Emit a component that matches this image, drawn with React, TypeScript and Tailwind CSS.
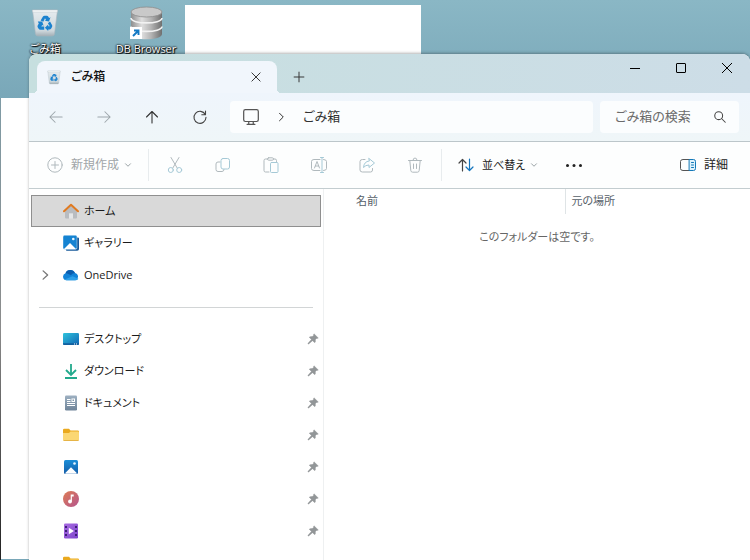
import React from "react";

type Kids = { children?: React.ReactNode; className?: string; stroke?: string };

function Glyph({ children, className = "h-4 w-4", stroke = "#b0b9bd" }: Kids) {
  return (
    <svg
      viewBox="0 0 16 16"
      className={`${className} shrink-0`}
      fill="none"
      stroke={stroke}
      strokeWidth="1"
      strokeLinecap="round"
      strokeLinejoin="round"
      aria-hidden="true"
    >
      {children}
    </svg>
  );
}

function BinIcon({ className, id }: { className: string; id: string }) {
  return (
    <svg viewBox="0 0 28 30" className={className} aria-hidden="true">
      <defs>
        <linearGradient id={id} x1="0" y1="0" x2="0" y2="1">
          <stop offset="0" stopColor="#e6ecef" />
          <stop offset="0.8" stopColor="#cdd7dc" />
          <stop offset="1" stopColor="#a3afb5" />
        </linearGradient>
      </defs>
      <path d="M1.500 2h25l-3 24q-.3 2-2.300 2h-14.400q-2 0-2.300-2z" fill={`url(#${id})`} stroke="#a9b6bd" strokeWidth=".6" />
      <path d="M1.500 2h25l-.3 2.200h-24.400z" fill="#f4f7f8" stroke="#b5c1c7" strokeWidth=".4" />
      <g fill="#1b82cf">
        <path d="M9.600 12.500l2.200-3.700q.6-1 1.800-1h2.200q1 0 1.600 1l.7 1.200 1.400-.8-1.500 4.300-4.400-.8 1.400-.8-1-1.600-1.700 3.500z" />
        <path d="M19 13.500l2 3.400q.6 1.100 0 2.200l-.8 1.300q-.6 1-1.800 1h-1.200v1.600l-3.300-3.200 3.300-3.200v1.700h1.600l-1.900-3z" />
        <path d="M6.800 13.500h4.400l1.400 4.200-1.400-.7-.9 1.500h2.900v3.200h-3.700q-1.300 0-1.900-1l-.9-1.500q-.5-1 .1-2l1-1.800z" />
      </g>
    </svg>
  );
}

function DatabaseIcon() {
  return (
    <svg viewBox="0 0 34 34" className="h-[34px] w-[34px]" aria-hidden="true">
      <defs>
        <linearGradient id="db-metal" x1="0" x2="1">
          <stop offset="0" stopColor="#8e8e8e" />
          <stop offset="0.35" stopColor="#dedede" />
          <stop offset="0.65" stopColor="#b4b4b4" />
          <stop offset="1" stopColor="#6f6f6f" />
        </linearGradient>
      </defs>
      <path d="M2 6v22c0 7 31 7 31 0V6z" fill="url(#db-metal)" />
      <path d="M2 12c0 6.500 31 6.500 31 0M2 20.500c0 6.500 31 6.500 31 0" fill="none" stroke="#f2f2f2" strokeWidth="1.600" />
      <ellipse cx="17.500" cy="6" rx="15.500" ry="5" fill="#c9c9c9" stroke="#8b8b8b" strokeWidth=".8" />
      <path d="M1 21h12v12H1z" fill="#fff" />
      <path d="M4 30l5-5M5 24.500h4.500V29" fill="none" stroke="#1479c4" strokeWidth="1.900" />
    </svg>
  );
}

function ChevronDown() {
  return (
    <Glyph className="h-2 w-2" stroke="#8f989c">
      <path d="M3 5.500l5 5 5-5" strokeWidth="1.800" />
    </Glyph>
  );
}

function PinIcon() {
  return (
    <svg viewBox="0 0 12 12" className="h-3 w-3 shrink-0" aria-hidden="true">
      <path
        d="M7 .8L11.300 5q-.8.700-1.700.4L8.300 6.700q.6 1.800-.5 3L5.500 7.700 1.700 11H1v-.7l3.400-3.900L2.200 4.200q1.200-1.100 3-.6l1.400-1.200Q6.300 1.500 7 .8z"
        fill="#929698"
        stroke="#929698"
        strokeWidth=".4"
      />
    </svg>
  );
}

function PlaceIcon({ kind }: { kind: string }) {
  const box = "h-4 w-4 shrink-0";
  switch (kind) {
    case "home":
      return (
        <svg viewBox="0 0 16 16" className={box} aria-hidden="true">
          <path d="M2 7.500L8 2.500l6 5V14.500q0 1-1 1H10v-5H6v5H3q-1 0-1-1z" fill="#b9bcc0" />
          <path d="M6 10.500h4v5H6z" fill="#e4e6e8" />
          <path d="M1 8.300L8 1.800l7 6.500" fill="none" stroke="#e07b22" strokeWidth="2" strokeLinecap="round" strokeLinejoin="round" />
        </svg>
      );
    case "gallery":
      return (
        <svg viewBox="0 0 16 16" className={box} aria-hidden="true">
          <path d="M14 2.500h.8q1.200 0 1.200 1v10.500q0 1.800-1.800 1.800H4q-1.200 0-1.200-1.200V14H14z" fill="#16599a" />
          <rect width="14" height="14" y=".3" rx="1.500" fill="#1583d2" stroke="#fff" strokeWidth=".4" />
          <path d="M1 14l6-6 6 6q-.5.300-1 .3H2q-.6 0-1-.3z" fill="#fff" />
          <circle cx="10.300" cy="4" r="1.300" fill="#e8f6ff" />
        </svg>
      );
    case "onedrive":
      return (
        <svg viewBox="0 0 16 16" className={box} aria-hidden="true">
          <path d="M3.500 13.300A3.600 3.600 0 0 1 2.500 6.300 5.200 5.200 0 0 1 12 6 3.800 3.800 0 0 1 12.500 13.300z" fill="#1283d8" />
          <path d="M2.500 6.300A5.200 5.200 0 0 1 12 6Q9.500 6 7.800 8.300L5.500 7Q4 6.100 2.500 6.300z" fill="#0b5cad" />
          <path d="M1.500 12.500L9.500 9.200l5.900 2.500q-.9 1.600-2.900 1.600h-9Q2.300 13.300 1.500 12.500z" fill="#2ea0e8" />
        </svg>
      );
    case "desktop":
      return (
        <svg viewBox="0 0 16 16" className={box} aria-hidden="true">
          <defs>
            <linearGradient id="desk" x1="0" y1="0" x2="1" y2="1">
              <stop offset="0" stopColor="#2fc3dc" />
              <stop offset="1" stopColor="#1166b5" />
            </linearGradient>
          </defs>
          <rect y="2" width="16" height="12" rx="1.300" fill="url(#desk)" />
          <path d="M0 12.200h16v.6q0 1.200-1.200 1.200H1.200Q0 14 0 12.800z" fill="#125f9f" />
          <path d="M11 12.500h1v1h-1zM13 12.500h1v1h-1z" fill="#fff" />
        </svg>
      );
    case "download":
      return (
        <svg viewBox="0 0 16 16" className={box} fill="none" stroke="#22a98c" strokeWidth="1.800" aria-hidden="true">
          <path d="M8 1v10.500M3 7l5 5 5-5M2 15h12" />
        </svg>
      );
    case "document":
      return (
        <svg viewBox="0 0 16 16" className={box} aria-hidden="true">
          <defs>
            <linearGradient id="doc" x1="0" y1="0" x2="0" y2="1">
              <stop offset="0" stopColor="#9db0c1" />
              <stop offset="1" stopColor="#6f8499" />
            </linearGradient>
          </defs>
          <rect x="2" y=".5" width="12" height="15" rx="1.300" fill="url(#doc)" />
          <path d="M4 4.500h3.500M4 6.500h3.500M4 8.500h8M4 10.500h8" stroke="#fff" />
          <rect x="9" y="4" width="2.500" height="2.500" fill="#7f94a8" stroke="#fff" />
        </svg>
      );
    case "picture":
      return (
        <svg viewBox="0 0 16 16" className={box} aria-hidden="true">
          <defs>
            <linearGradient id="pic" x1="0" y1="0" x2="0" y2="1">
              <stop offset="0" stopColor="#1c8ed8" />
              <stop offset="1" stopColor="#155da8" />
            </linearGradient>
          </defs>
          <rect x="1" y="1" width="14" height="14" rx="1.500" fill="url(#pic)" />
          <path d="M2 14.300l6-6 6 6q-.5.400-1 .4H3q-.6 0-1-.4z" fill="#fff" />
          <circle cx="11.500" cy="4.500" r="1.300" fill="#e8f6ff" />
        </svg>
      );
    case "music":
      return (
        <svg viewBox="0 0 16 16" className={box} aria-hidden="true">
          <defs>
            <linearGradient id="mus" x1="0" y1="0" x2="1" y2="1">
              <stop offset="0" stopColor="#de7c53" />
              <stop offset="1" stopColor="#b4558f" />
            </linearGradient>
          </defs>
          <circle cx="8" cy="8" r="8" fill="url(#mus)" />
          <circle cx="7" cy="10.500" r="1.900" fill="#fff" />
          <path d="M7.700 10.500V3.500h3v2H8.900v5z" fill="#fff" />
        </svg>
      );
    case "video":
      return (
        <svg viewBox="0 0 16 16" className={box} aria-hidden="true">
          <defs>
            <linearGradient id="vid" x1="0" y1="0" x2="1" y2="1">
              <stop offset="0" stopColor="#a96be2" />
              <stop offset="1" stopColor="#7d45cc" />
            </linearGradient>
          </defs>
          <rect x="1" y=".5" width="14" height="15" rx="1.300" fill="url(#vid)" />
          <path d="M2 3h2v2H2zM2 7h2v2H2zM2 11h2v2H2zM12 3h2v2h-2zM12 7h2v2h-2zM12 11h2v2h-2z" fill="#3e1f78" />
          <path d="M5.800 4.800L11 8l-5.200 3.200z" fill="#fff" />
        </svg>
      );
    default:
      return (
        <svg viewBox="0 0 16 16" className={box} aria-hidden="true">
          <path d="M0 3q0-1.200 1.200-1.200h4.800L7.500 3.500h7.300Q16 3.500 16 4.700V8H0z" fill="#eaa91e" />
          <path d="M0 6h6l1.500-1.500h7.300q1.200 0 1.200 1.200v7.100q0 1.200-1.200 1.200H1.200Q0 14 0 12.800z" fill="#fbd773" />
          <path d="M.3 13.200q.3.800 1 .8h13.500q.8 0 1-.8z" fill="#e0a93a" />
        </svg>
      );
  }
}

type Place = { kind: string; label?: string; selected?: boolean; expandable?: boolean; pinned?: boolean };

const topPlaces: Place[] = [
  { kind: "home", label: "ホーム", selected: true },
  { kind: "gallery", label: "ギャラリー" },
  { kind: "onedrive", label: "OneDrive", expandable: true },
];

const quickPlaces: Place[] = [
  { kind: "desktop", label: "デスクトップ", pinned: true },
  { kind: "download", label: "ダウンロード", pinned: true },
  { kind: "document", label: "ドキュメント", pinned: true },
  { kind: "folder", pinned: true },
  { kind: "picture", pinned: true },
  { kind: "music", pinned: true },
  { kind: "video", pinned: true },
  { kind: "folder" },
];

function PlaceRow({ place }: { place: Place }) {
  return (
    <li>
      <button
        type="button"
        className={`flex h-8 w-full items-center gap-[5px] border text-left text-[11px] text-[#1b1b1b] ${
          place.selected ? "border-[#8f8f8f] bg-[#d9d9d9]" : "border-transparent"
        }`}
      >
        <span className="flex w-[26px] shrink-0 justify-center">
          {place.expandable && (
            <Glyph className="h-3 w-3" stroke="#777">
              <path d="M5.500 2.500l6 5.500-6 5.500" strokeWidth="1.800" />
            </Glyph>
          )}
        </span>
        <PlaceIcon kind={place.kind} />
        <span className="flex-1 whitespace-nowrap">{place.label}</span>
        {place.pinned && (
          <span className="mr-px">
            <PinIcon />
          </span>
        )}
      </button>
    </li>
  );
}

function NavButton({ label, children }: { label: string; children: React.ReactNode }) {
  return (
    <button type="button" aria-label={label} className="flex h-8 w-12 shrink-0 items-center justify-center">
      {children}
    </button>
  );
}

const soft = "#a5c9d6";

export default function App() {
  return (
    <div className="relative h-screen overflow-hidden bg-linear-to-b from-[#8ab7c5] to-[#79a7b8] to-[100px] [font-family:'Open_Sans','Noto_Sans_CJK_JP',sans-serif] [font-feature-settings:'palt']">
      <div className="absolute top-[98px] bottom-0 left-0 w-px bg-linear-to-b from-[#7f9ba5] via-[#8b8b8b] to-[#222]" />
      <div className="absolute top-[98px] bottom-px left-px w-7 bg-white" />
      <div className="absolute top-[5px] left-[185px] h-[60px] w-[236px] bg-white" />

      <div className="absolute top-1.5 left-[5px] flex w-20 flex-col items-center gap-px text-[11px] leading-4 text-white [text-shadow:1px_1px_1px_#000,0_0_2px_#000,0_0_2px_#000]">
        <BinIcon className="h-[34px] w-7" id="bin-large" />
        <span>ごみ箱</span>
      </div>
      <div className="absolute top-1.5 left-[106px] flex w-20 flex-col items-center gap-px text-[11px] leading-4 text-white [text-shadow:1px_1px_1px_#000,0_0_2px_#000,0_0_2px_#000]">
        <DatabaseIcon />
        <span className="whitespace-nowrap">DB Browser</span>
      </div>

      <main className="absolute inset-0 top-[54px] left-[29px] flex flex-col overflow-hidden rounded-t-lg bg-white shadow-[0_-1px_3px_rgba(0,0,0,0.3)]">
        <header className="flex h-[39px] shrink-0 bg-linear-to-r from-[#c6dfdf] to-[#cddde7] pl-2">
          <div className="relative mt-[7px] flex w-60 items-center rounded-t-lg bg-[#f1f6fc] pr-[11px] pl-2.5 text-[12px] font-medium text-[#111] after:absolute after:bottom-0 after:left-full after:h-1 after:w-1 after:bg-[radial-gradient(circle_at_top_right,transparent_4px,#f1f6fc_4px)] before:absolute before:right-full before:bottom-0 before:h-1 before:w-1 before:bg-[radial-gradient(circle_at_top_left,transparent_4px,#f1f6fc_4px)]">
            <BinIcon className="mr-2.5 h-[15px] w-3.5" id="bin-tab" />
            <span className="flex-1">ごみ箱</span>
            <button type="button" aria-label="タブを閉じる" className="flex h-5 w-5 items-center justify-center">
              <Glyph className="h-3 w-3" stroke="#333">
                <path d="M2.500 2.500l11 11m0-11l-11 11" strokeWidth="1.300" />
              </Glyph>
            </button>
          </div>
          <button type="button" aria-label="新しいタブ" className="mt-[7px] ml-2 flex w-7 items-center justify-center">
            <Glyph className="h-3 w-3" stroke="#333">
              <path d="M8 1.500v13M1.500 8h13" strokeWidth="1.300" />
            </Glyph>
          </button>
          <div className="ml-auto flex h-7">
            <button type="button" aria-label="最小化" className="flex w-[46px] items-center justify-center">
              <svg viewBox="0 0 10 10" className="h-2.5 w-2.5" stroke="#000" aria-hidden="true"><path d="M0 5.500h10" /></svg>
            </button>
            <button type="button" aria-label="最大化" className="flex w-[46px] items-center justify-center">
              <svg viewBox="0 0 10 10" className="h-2.5 w-2.5" fill="none" stroke="#000" aria-hidden="true"><rect x=".5" y=".5" width="9" height="9" rx=".5" /></svg>
            </button>
            <button type="button" aria-label="閉じる" className="flex w-[46px] items-center justify-center">
              <svg viewBox="0 0 10 10" className="h-2.5 w-2.5" stroke="#000" aria-hidden="true"><path d="M0 0l10 10M10 0L0 10" /></svg>
            </button>
          </div>
        </header>

        <nav className="flex h-[49px] shrink-0 items-center border-b border-[#bcc6ca] bg-linear-to-b from-[#eff5fc] to-[#eff6f8] pr-[11px] pl-[3px]" aria-label="ナビゲーション">
          <NavButton label="戻る">
            <Glyph className="h-3.5 w-3.5" stroke="#9da6ab"><path d="M15 8H1M7 2L1 8l6 6" strokeWidth="1.200" /></Glyph>
          </NavButton>
          <NavButton label="進む">
            <Glyph className="h-3.5 w-3.5" stroke="#9da6ab"><path d="M1 8h14M9 2l6 6-6 6" strokeWidth="1.200" /></Glyph>
          </NavButton>
          <NavButton label="上へ">
            <Glyph stroke="#333"><path d="M8 14V2.500M2.500 8L8 2.500 13.500 8" strokeWidth="1.100" /></Glyph>
          </NavButton>
          <NavButton label="最新の情報に更新">
            <Glyph stroke="#444"><path d="M13.300 5.500A6 6 0 1 0 14 8.300M13.500 2v3.700H9.800" strokeWidth="1.100" /></Glyph>
          </NavButton>
          <div className="ml-1.5 flex h-8 flex-1 items-center rounded bg-[#fbfdfe] pl-3">
            <Glyph className="h-[18px] w-[18px]" stroke="#555">
              <rect x="1.500" y="1.500" width="13" height="10.500" rx="1.500" strokeWidth="1.100" />
              <path d="M6 12v2.500M10 12v2.500M4.500 14.500h7" strokeWidth="1.100" />
            </Glyph>
            <span className="flex w-[43px] justify-center">
              <Glyph className="h-2.5 w-2.5" stroke="#333"><path d="M4 2l6 6-6 6" strokeWidth="1.600" /></Glyph>
            </span>
            <button type="button" className="text-[13px] text-[#333]">ごみ箱</button>
          </div>
          <label className="ml-[7px] flex h-8 w-[139px] items-center rounded bg-[#fbfdfe] pr-3 pl-[15px]">
            <input
              type="search"
              aria-label="ごみ箱の検索"
              placeholder="ごみ箱の検索"
              className="min-w-0 flex-1 bg-transparent text-[13px] outline-none placeholder:text-[#6b6b6b]"
            />
            <Glyph className="h-3.5 w-3.5" stroke="#444">
              <circle cx="6.500" cy="6.500" r="4.500" strokeWidth="1.200" />
              <path d="M10 10l4 4" strokeWidth="1.200" />
            </Glyph>
          </label>
        </nav>

        <div className="flex h-[47px] shrink-0 items-center border-b border-[#c3cdd0] bg-[#fdfefe] pr-[22px] pl-[18px] text-[12px] text-[#222]" role="toolbar" aria-label="コマンド">
          <button type="button" disabled aria-haspopup="menu" className="flex h-8 w-[101px] items-center text-[#a0a5a8]">
            <Glyph><circle cx="8" cy="8" r="7.200" /><path d="M8 4.500v7M4.500 8h7" /></Glyph>
            <span className="mr-[5px] ml-2 whitespace-nowrap [font-feature-settings:normal]">新規作成</span>
            <ChevronDown />
          </button>
          <span className="h-8 border-l border-[#e8ecee]" />
          <div className="flex pl-0.5">
            <NavButton label="切り取り">
              <Glyph>
                <path d="M4 .5l6.200 10.500M12 .5L5.800 11" />
                <circle cx="3.800" cy="13" r="2.500" stroke={soft} /><circle cx="12.200" cy="13" r="2.500" stroke={soft} />
              </Glyph>
            </NavButton>
            <NavButton label="コピー">
              <Glyph>
                <path d="M5 5H3Q1 5 1 7v5.500q0 2 2 2h4q2 0 2-2" />
                <rect x="6" y="1.500" width="8.500" height="10.500" rx="2" stroke={soft} />
              </Glyph>
            </NavButton>
            <NavButton label="貼り付け">
              <Glyph>
                <path d="M4.500 2H2.500Q1 2 1 3.500v10Q1 15 2.500 15H6M10.500 2H12q1.500 0 1.500 1.500v1" />
                <rect x="4.500" y=".8" width="6" height="2.400" rx="1.200" />
                <rect x="7.500" y="5.500" width="7.500" height="10" rx="1" stroke={soft} />
              </Glyph>
            </NavButton>
            <NavButton label="名前の変更">
              <Glyph>
                <path d="M9 2.500H3q-2.500 0-2.500 2v7q0 2 2.500 2h6M12.500 2.500q3 0 3 2v7q0 2-3 2M3.500 11L6 4.500 8.500 11M4.300 9h3.400" />
                <path d="M9.500.500h3M9.500 15.500h3M11 .500v15" stroke={soft} />
              </Glyph>
            </NavButton>
            <NavButton label="共有">
              <Glyph>
                <path d="M6 2.500H3.500q-2.500 0-2.500 2v8.500q0 2 2.500 2h8q2 0 2-2v-1.500" />
                <path d="M10 1.500l5.500 4.500L10 10.500V8Q6.500 8 4.500 10.500 5 4.500 10 4z" stroke={soft} />
              </Glyph>
            </NavButton>
            <NavButton label="削除">
              <Glyph>
                <path d="M1.500 3.500h13M6 3.500q0-2.500 2-2.500t2 2.500M2.800 3.500l1 10q.2 1.700 1.800 1.700h4.800q1.600 0 1.800-1.700l1-10M6.500 7v4.500M9.500 7v4.500" />
              </Glyph>
            </NavButton>
          </div>
          <span className="ml-0.5 h-8 border-l border-[#e8ecee]" />
          <button type="button" aria-haspopup="menu" className="ml-4 flex h-8 items-center text-[11px]">
            <Glyph stroke="#444">
              <path d="M4.500 14V2.500M1 6l3.500-3.500L8 6" strokeWidth="1.200" />
              <path d="M11.500 2v11.500M8 10l3.500 3.500L15 10" stroke="#1475bd" strokeWidth="1.200" />
            </Glyph>
            <span className="mr-[5px] ml-2 whitespace-nowrap">並べ替え</span>
            <ChevronDown />
          </button>
          <button type="button" aria-label="その他" className="ml-5 flex h-8 w-8 items-center justify-center">
            <Glyph stroke="none">
              <g fill="#222"><circle cx="1.500" cy="8.500" r="1.500" /><circle cx="8" cy="8.500" r="1.500" /><circle cx="14.500" cy="8.500" r="1.500" /></g>
            </Glyph>
          </button>
          <button type="button" className="ml-auto flex h-8 items-center gap-2">
            <Glyph stroke="#555">
              <path d="M10 2.500H3q-2.500 0-2.500 2v7q0 2 2.500 2h7" />
              <path d="M9.500 2.500h4q2 0 2 2v7q0 2-2 2h-4z" stroke="#1479b8" fill="#dff3fc" />
              <path d="M11.500 5.500h2M11.500 8h2M11.500 10.500h2" stroke="#1479b8" />
            </Glyph>
            <span className="whitespace-nowrap [font-feature-settings:normal]">詳細</span>
          </button>
        </div>

        <div className="flex min-h-0 flex-1">
          <aside className="w-[295px] shrink-0 overflow-hidden border-r border-[#eef0f1] pt-1.5 pr-0.5 pl-0.5">
            <ul>{topPlaces.map((p) => <PlaceRow key={p.kind} place={p} />)}</ul>
            <hr className="mx-2 mt-4 mb-[15px] border-[#d2d5d6]" />
            <ul>{quickPlaces.map((p, i) => <PlaceRow key={i} place={p} />)}</ul>
          </aside>
          <section className="min-w-0 flex-1">
            <table className="w-full table-fixed text-left text-[11px]">
              <thead>
                <tr className="h-[25px] text-[#566068]">
                  <th className="w-[241px] border-r border-[#dfe4e6] p-0 pl-8 font-normal [font-feature-settings:normal]">名前</th>
                  <th className="p-0 pl-1.5 font-normal">元の場所</th>
                </tr>
              </thead>
              <tbody>
                <tr>
                  <td colSpan={2} className="h-[46px] text-center text-[#666]">このフォルダーは空です。</td>
                </tr>
              </tbody>
            </table>
          </section>
        </div>
      </main>
    </div>
  );
}
